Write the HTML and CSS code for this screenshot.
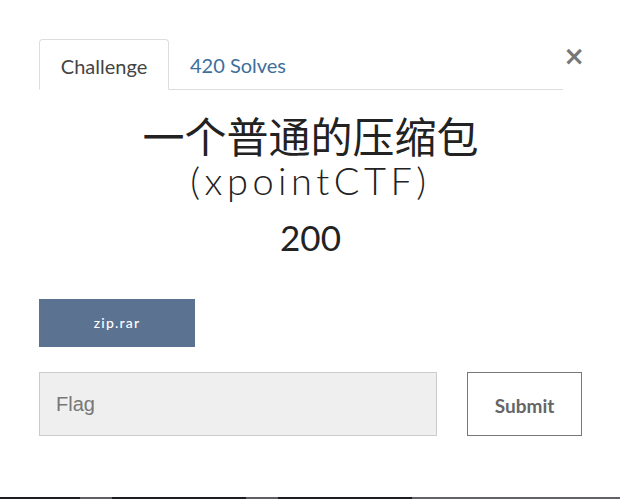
FILE: index.html
```html
<!DOCTYPE html>
<html lang="en">
<head>
    <meta charset="UTF-8">
    <title>Challenge</title>
    <link rel="stylesheet" href="styles.css">
</head>
<body>
    <div class="modal">
        <div class="modal-head">
            <ul class="nav-tabs">
                <li class="tab active">Challenge</li>
                <li class="tab"><a href="#solves">420 Solves</a></li>
            </ul>
            <button class="close" type="button">&times;</button>
        </div>

        <div class="chal-info">
            <h2 class="chal-name">一个普通的压缩包</h2>
            <h3 class="chal-cat">(xpointCTF)</h3>
            <h3 class="chal-value">200</h3>
        </div>

        <div class="files">
            <a class="file-btn" href="#">zip.rar</a>
        </div>

        <form class="flag-form">
            <input type="text" class="flag-input" placeholder="Flag">
            <button type="submit" class="submit-btn">Submit</button>
        </form>
    </div>
    <div class="taskbar">
        <span class="seg dark"></span>
        <span class="seg gray"></span>
        <span class="seg dark2"></span>
        <span class="seg gray"></span>
        <span class="seg dark2"></span>
        <span class="seg light"></span>
    </div>
</body>
</html>
```

FILE: styles.css
```css
* {
    margin: 0;
    padding: 0;
    box-sizing: border-box;
}

body {
    width: 620px;
    height: 499px;
    background: #fff;
    font-family: Lato, "Noto Sans", sans-serif;
    color: #333;
    display: flex;
    flex-direction: column;
    overflow: hidden;
}

.modal {
    flex: 1;
    padding: 39px 38px 0 39px;
}

.modal-head {
    display: flex;
    align-items: flex-start;
}

.nav-tabs {
    list-style: none;
    display: flex;
    width: 527px;
    border-bottom: 1px solid #ddd;
}

.tab {
    height: 51px;
    padding: 0 21px;
    font-size: 20px;
    line-height: 52px;
    margin-bottom: -1px;
}

.tab.active {
    width: 130px;
    padding: 0;
    text-align: center;
    border: 1px solid #ddd;
    border-bottom-color: #fff;
    border-radius: 4px 4px 0 0;
    color: #444;
    background: #fff;
}

.tab a {
    color: #3d6f9c;
    text-decoration: none;
}

.close {
    margin-left: auto;
    margin-right: -3px;
    margin-top: 2px;
    border: none;
    background: none;
    font-family: "DejaVu Sans", sans-serif;
    font-size: 26px;
    font-weight: bold;
    color: #777;
    line-height: 30px;
    cursor: pointer;
}

.chal-info {
    text-align: center;
    color: #222;
    margin-top: 24px;
}

.chal-name {
    font-family: "Noto Sans CJK SC", sans-serif;
    font-size: 42px;
    font-weight: 400;
    line-height: 42px;
}

.chal-cat {
    font-family: Lato, sans-serif;
    font-size: 38px;
    font-weight: 300;
    letter-spacing: 4.5px;
    line-height: 44px;
    margin-top: 2px;
}

.chal-value {
    font-family: Lato, sans-serif;
    font-size: 35px;
    font-weight: 400;
    line-height: 42px;
    margin-top: 14px;
}

.files {
    margin-top: 41px;
}

.file-btn {
    display: inline-block;
    width: 156px;
    height: 48px;
    line-height: 48px;
    text-align: center;
    background: #5b7290;
    color: #fff;
    font-size: 14px;
    font-weight: 500;
    letter-spacing: 1.2px;
    text-decoration: none;
}

.flag-form {
    display: flex;
    gap: 30px;
    margin-top: 25px;
}

.flag-input {
    width: 398px;
    height: 64px;
    padding: 0 16px;
    background: #efefef;
    border: 1px solid #ccc;
    font-family: "Liberation Sans", sans-serif;
    font-size: 20px;
    color: #333;
}

.flag-input::placeholder {
    color: #777;
}

.submit-btn {
    width: 115px;
    height: 64px;
    padding-top: 2px;
    background: #fff;
    border: 1px solid #777;
    font-family: Lato, sans-serif;
    font-size: 19px;
    font-weight: bold;
    color: #666;
}

.taskbar {
    display: flex;
    height: 2px;
}

.seg.dark { width: 80px; background: #1b1d20; }
.seg.gray { width: 32px; background: #5d5f62; }
.seg.dark2 { width: 134px; background: #1b1d20; }
.seg.light { flex: 1; background: #606266; }
```
